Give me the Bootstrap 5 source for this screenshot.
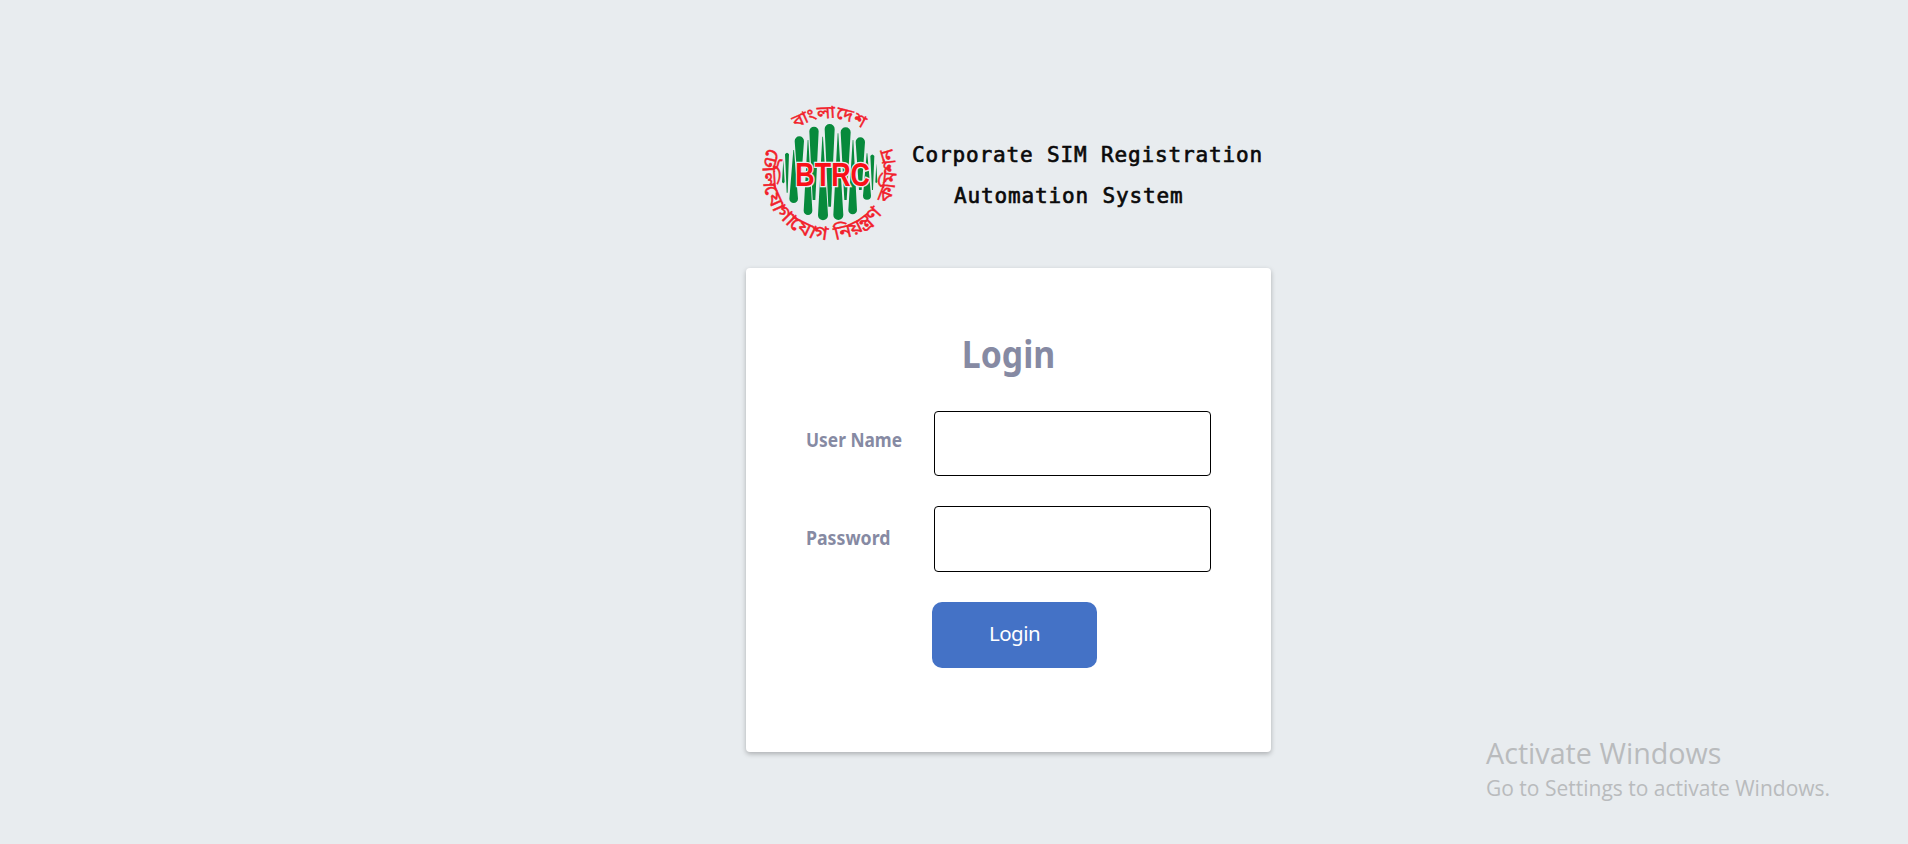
<!DOCTYPE html>
<html lang="en">
<head>
<meta charset="utf-8">
<meta name="viewport" content="width=device-width, initial-scale=1">
<title>Corporate SIM Registration</title>
<link href="https://cdn.jsdelivr.net/npm/bootstrap@5.3.0/dist/css/bootstrap.min.css" rel="stylesheet">
<style>
body{background:#e8ecef;font-family:"Noto Sans","Open Sans",sans-serif;color:#868aa3;height:844px;overflow:hidden}
.login-wrap{width:525px;margin-left:746px;padding-top:90px}
.brand{height:178px}
.brand svg{display:block;width:180px;height:170px;margin-left:-6px;flex:none}
.brand-title{font-family:"DejaVu Sans Mono",monospace;font-size:21px;letter-spacing:.86px;line-height:41px;color:#0a0a0a;-webkit-text-stroke:.65px #0a0a0a;white-space:nowrap;margin-left:-8px;padding-top:45px;width:352px}
.brand-title div+div{padding-left:42px}
.login-card{height:484px;border:0;border-radius:4px;box-shadow:0 2px 5px rgba(0,0,0,.26);padding:61px 60px 0;background:#fff}
.login-card h1{font-size:38px;font-weight:700;line-height:48px;margin:0 0 34px;text-align:center;transform:scaleX(.89)}
.field-label{font-size:19.7px;font-weight:700;line-height:28px;width:128px;flex:none;white-space:nowrap;transform:scaleX(.88);transform-origin:0 50%;padding-top:15px}
.field-label.lower{padding-top:18px;transform:scaleX(.9)}
.field-row{margin-bottom:30px}
.login-card .form-control{width:277px;height:66px;border:1px solid #000;border-radius:4px}
.login-card .form-control.first{height:65px}
.btn-login{width:165px;height:66px;margin-left:126px;background:#4472c6;border:0;border-radius:10px;color:#fff;font-size:20.5px;letter-spacing:-.5px;padding:0 0 4px}
.watermark{left:1486px;top:733px;font-family:"Open Sans",sans-serif;color:#b9bbbd;white-space:nowrap}
.wm-a{font-size:28.7px;line-height:40px}
.wm-b{font-size:21px;line-height:30px}
</style>
</head>
<body>
<main class="login-wrap">
<div class="brand d-flex">
<svg viewBox="0 0 540 510">
<defs>
<path id="arcTop" d="M168 117A170 170 0 0 1 368 117"/>
<path id="arcLeft" d="M84 174A200 200 0 0 0 262 450"/>
<path id="arcLow" d="M286 449A200 200 0 0 0 430 366"/>
<path id="arcRight" d="M445 341A200 200 0 0 0 453 170"/>
</defs>
<g fill="#078a3c">
<path d="M164 153a14 14 0 0 1 28 0L182 290h-8zM208 124a14 14 0 0 1 28 0L226 330h-8zM254 117a15 15 0 0 1 30 0L273 350h-8zM302 127a15 15 0 0 1 30 0L320 330h-7zM347 156a14 14 0 0 1 28 0L365 300h-8zM135 193q6-9 12 0L143 308h-3zM391 198q6-9 12 0L399 300h-3z"/>
<path d="M148 326a13 13 0 0 0 26 0L162 180h-2zM191 362a13 13 0 0 0 26 0L205 150h-2zM234 376a15 15 0 0 0 30 0L249 140h-2zM280 375a15 15 0 0 0 30 0L295 130h-2zM325 360a13 13 0 0 0 26 0L340 150h-2zM369 317a12 12 0 0 0 24 0L382 190h-2zM130 210l4 65q-4 10-8 0zM409 220l3 55q-4 8-6 0z"/>
</g>
<g fill="#f2212b" stroke="#f2212b" stroke-width="1.2" font-family="Noto Sans Bengali,Noto Sans,sans-serif" font-size="58" font-weight="400">
<text font-size="52"><textPath href="#arcTop" textLength="212" lengthAdjust="spacingAndGlyphs">বাংলাদেশ</textPath></text>
<text><textPath href="#arcLeft" textLength="384" lengthAdjust="spacingAndGlyphs">টেলিযোগাযোগ</textPath></text>
<text><textPath href="#arcLow" textLength="166" lengthAdjust="spacingAndGlyphs">নিয়ন্ত্রণ</textPath></text>
<text><textPath href="#arcRight" textLength="174" lengthAdjust="spacingAndGlyphs">কমিশন</textPath></text>
</g>
<text x="166" y="288" textLength="224" lengthAdjust="spacingAndGlyphs" font-family="Liberation Sans,sans-serif" font-weight="700" font-size="97" fill="#fa1018" stroke="#e8ecef" stroke-width="8" paint-order="stroke">BTRC</text>
</svg>
<div class="brand-title"><div>Corporate SIM Registration</div><div>Automation System</div></div>
</div>
<section class="card login-card">
<h1>Login</h1>
<form>
<div class="d-flex field-row"><label for="user" class="field-label">User Name</label><input id="user" class="form-control first" type="text"></div>
<div class="d-flex field-row"><label for="pass" class="field-label lower">Password</label><input id="pass" class="form-control" type="password"></div>
<button type="button" class="btn btn-login">Login</button>
</form>
</section>
</main>
<aside class="watermark position-absolute"><div class="wm-a">Activate Windows</div><div class="wm-b">Go to Settings to activate Windows.</div></aside>
<script src="https://cdn.jsdelivr.net/npm/bootstrap@5.3.0/dist/js/bootstrap.bundle.min.js"></script>
</body>
</html>
